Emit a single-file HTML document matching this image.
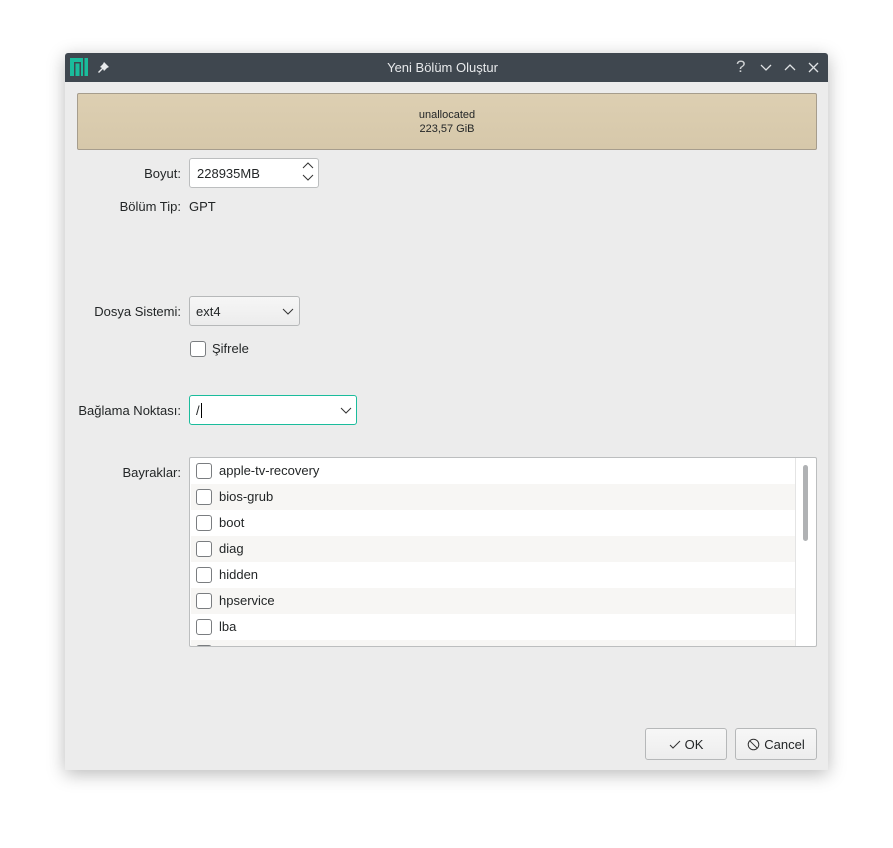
<!DOCTYPE html>
<html><head><meta charset="utf-8"><style>
*{box-sizing:border-box;margin:0;padding:0}
body{width:893px;height:848px;background:#fff;position:relative;overflow:hidden;font-family:"Liberation Sans","DejaVu Sans",sans-serif;font-size:13px;color:#232627}
.a{position:absolute}
.win{left:65px;top:53px;width:763px;height:717px;background:#ececec;box-shadow:0 4px 18px rgba(0,0,0,.28);border-radius:3px 3px 0 0;overflow:hidden}
.tb{left:0;top:0;width:763px;height:29px;background:#3f474f;color:#e8eaec}
.lbl{text-align:right;width:120px}
.cb{width:16px;height:16px;border:1px solid #7a7d80;border-radius:3px;background:#fff}
.row{left:1px;width:605px;height:26px}
.row span{position:absolute;left:28px;top:5px;font-size:13px}
.row .cb{left:5px;top:5px}
</style></head><body>
<div class="a win">
 <div class="a tb">
  <svg class="a" style="left:5px;top:5px" width="18" height="18" viewBox="0 0 18 18"><rect width="18" height="18" fill="#1abc9c"/><rect x="4" y="4" width="1.5" height="14" fill="#3f474f"/><rect x="4" y="4" width="7" height="1.5" fill="#3f474f"/><rect x="9.5" y="4" width="1.5" height="14" fill="#3f474f"/><rect x="13" y="0" width="1.5" height="18" fill="#3f474f"/></svg>
  <svg class="a" style="left:32px;top:8px" width="13" height="13" viewBox="0 0 13 13"><path d="M7 1 L12 6 L10 7 L7 10 L6 8 L2 12 L1 11 L5 7 L3 6 L6 3 Z" fill="#e8eaec"/></svg>
  <div class="a" style="left:-4px;width:763px;top:7px;text-align:center;font-size:13px">Yeni Bölüm Oluştur</div>
  <div class="a" style="left:671px;top:4px;font-size:17px;color:#cfd2d4">?</div>
  <svg class="a" style="left:694px;top:8px" width="64" height="13" viewBox="0 0 64 13" stroke="#dfe2e4" stroke-width="1.3" fill="none"><path d="M2 4 L7 9 L12 4"/><path d="M26 9 L31 4 L36 9"/><path d="M50 2 L59 11 M59 2 L50 11"/></svg>
 </div>
 <div class="a" style="left:12px;top:40px;width:740px;height:57px;background:linear-gradient(#ddcfb2,#d6c8aa);border:1px solid #a69d8d;border-radius:2px;text-align:center;font-size:11px;line-height:14px;padding-top:14px">unallocated<br>223,57 GiB</div>
 <div class="a lbl" style="left:-4px;top:113px">Boyut:</div>
 <div class="a" style="left:124px;top:105px;width:130px;height:30px;background:#fff;border:1px solid #bcbebf;border-radius:3px;padding:7px 0 0 7px">228935MB</div>
 <svg class="a" style="left:237px;top:109px" width="12" height="20" viewBox="0 0 12 20" stroke="#333" fill="none"><path d="M1 6 L6 1 L11 6"/><path d="M1 13 L6 18 L11 13"/></svg>
 <div class="a lbl" style="left:-4px;top:146px">Bölüm Tip:</div>
 <div class="a" style="left:124px;top:146px">GPT</div>
 <div class="a lbl" style="left:-4px;top:251px">Dosya Sistemi:</div>
 <div class="a" style="left:124px;top:243px;width:111px;height:30px;background:linear-gradient(#f6f6f6,#ececec);border:1px solid #b6b8b9;border-radius:3px;padding:7px 0 0 6px">ext4</div>
 <svg class="a" style="left:217px;top:255px" width="12" height="8" viewBox="0 0 12 8" stroke="#333" fill="none"><path d="M1 1 L6 6 L11 1"/></svg>
 <div class="a cb" style="left:125px;top:288px"></div>
 <div class="a" style="left:147px;top:288px">Şifrele</div>
 <div class="a lbl" style="left:-4px;top:350px">Bağlama Noktası:</div>
 <div class="a" style="left:124px;top:342px;width:168px;height:30px;background:#fff;border:1px solid #1abc9c;border-radius:3px;padding:7px 0 0 6px">/<span style="display:inline-block;width:1px;height:15px;background:#000;vertical-align:-3px;margin-left:1px"></span></div>
 <svg class="a" style="left:275px;top:354px" width="12" height="8" viewBox="0 0 12 8" stroke="#333" fill="none"><path d="M1 1 L6 6 L11 1"/></svg>
 <div class="a lbl" style="left:-4px;top:412px">Bayraklar:</div>
 <div class="a" style="left:124px;top:404px;width:628px;height:190px;background:#fff;border:1px solid #bcbebf;border-radius:2px;overflow:hidden">
  <div class="a row" style="top:0"><div class="a cb"></div><span>apple-tv-recovery</span></div>
  <div class="a row" style="top:26px;background:#f7f6f4"><div class="a cb"></div><span>bios-grub</span></div>
  <div class="a row" style="top:52px"><div class="a cb"></div><span>boot</span></div>
  <div class="a row" style="top:78px;background:#f7f6f4"><div class="a cb"></div><span>diag</span></div>
  <div class="a row" style="top:104px"><div class="a cb"></div><span>hidden</span></div>
  <div class="a row" style="top:130px;background:#f7f6f4"><div class="a cb"></div><span>hpservice</span></div>
  <div class="a row" style="top:156px"><div class="a cb"></div><span>lba</span></div>
  <div class="a row" style="top:182px;background:#f7f6f4"><div class="a cb"></div></div>
  <div class="a" style="left:605px;top:0;width:1px;height:190px;background:#e4e4e4"></div>
  <div class="a" style="left:613px;top:7px;width:5px;height:76px;background:#b0b2b4;border-radius:3px"></div>
 </div>
 <div class="a" style="left:580px;top:675px;width:82px;height:32px;background:linear-gradient(#f7f7f7,#ededed);border:1px solid #b6b8b9;border-radius:3px;text-align:center;padding-top:8px">
  <svg width="12" height="10" viewBox="0 0 12 10" stroke="#333" fill="none" style="vertical-align:-1px;margin-right:4px"><path d="M1 5 L4 8 L11 1"/></svg>OK</div>
 <div class="a" style="left:670px;top:675px;width:82px;height:32px;background:linear-gradient(#f7f7f7,#ededed);border:1px solid #b6b8b9;border-radius:3px;text-align:center;padding-top:8px">
  <svg width="13" height="13" viewBox="0 0 13 13" stroke="#333" fill="none" style="vertical-align:-2px;margin-right:4px"><circle cx="6.5" cy="6.5" r="5.3"/><path d="M2.8 2.8 L10.2 10.2"/></svg>Cancel</div>
</div>
</body></html>
